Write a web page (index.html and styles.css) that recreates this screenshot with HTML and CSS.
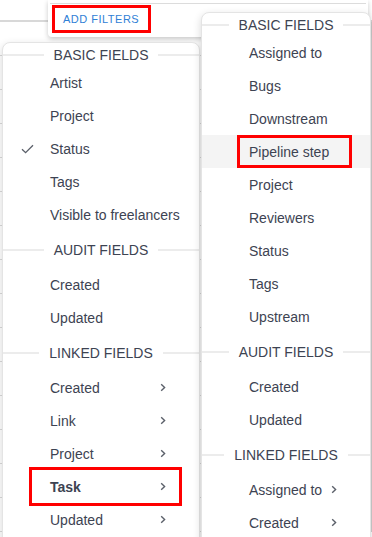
FILE: index.html
```html
<!DOCTYPE html>
<html lang="en">
<head>
<meta charset="utf-8">
<title>Filters</title>
<link rel="stylesheet" href="styles.css">
</head>
<body>
<div class="page">
  <div class="bg">
    <div class="bg-head"></div>
    <div class="bg-rows">
      <div class="bg-row"></div><div class="bg-row"></div><div class="bg-row"></div><div class="bg-row"></div>
      <div class="bg-row"></div><div class="bg-row"></div><div class="bg-row"></div><div class="bg-row"></div>
      <div class="bg-row"></div><div class="bg-row"></div><div class="bg-row"></div><div class="bg-row"></div>
      <div class="bg-row"></div><div class="bg-row"></div><div class="bg-row"></div>
    </div>
  </div>

  <div class="panel">
    <div class="panel-rule"></div>
    <div class="panel-actions">
      <button class="add-filters">ADD FILTERS</button>
    </div>
  </div>

  <div class="menu menu-left">
    <div class="hdr first"><span class="hdr-line"></span><span class="hdr-text">BASIC FIELDS</span><span class="hdr-line"></span></div>
    <div class="item"><span class="slot"></span><span class="label">Artist</span></div>
    <div class="item"><span class="slot"></span><span class="label">Project</span></div>
    <div class="item"><span class="slot"><svg class="check" width="13" height="10" viewBox="0 0 13 10"><path d="M1 5.2L4.6 8.6L12 1.2" fill="none" stroke="#5a5f69" stroke-width="1.3"/></svg></span><span class="label">Status</span></div>
    <div class="item"><span class="slot"></span><span class="label">Tags</span></div>
    <div class="item"><span class="slot"></span><span class="label">Visible to freelancers</span></div>
    <div class="hdr"><span class="hdr-line"></span><span class="hdr-text">AUDIT FIELDS</span><span class="hdr-line"></span></div>
    <div class="item"><span class="slot"></span><span class="label">Created</span></div>
    <div class="item"><span class="slot"></span><span class="label">Updated</span></div>
    <div class="hdr"><span class="hdr-line"></span><span class="hdr-text">LINKED FIELDS</span><span class="hdr-line"></span></div>
    <div class="item"><span class="slot"></span><span class="label">Created</span><svg class="chev" width="6" height="9" viewBox="0 0 6 9"><path d="M1.2 1.2L4.6 4.5L1.2 7.8" fill="none" stroke="#5a5f69" stroke-width="1.4"/></svg></div>
    <div class="item"><span class="slot"></span><span class="label">Link</span><svg class="chev" width="6" height="9" viewBox="0 0 6 9"><path d="M1.2 1.2L4.6 4.5L1.2 7.8" fill="none" stroke="#5a5f69" stroke-width="1.4"/></svg></div>
    <div class="item"><span class="slot"></span><span class="label">Project</span><svg class="chev" width="6" height="9" viewBox="0 0 6 9"><path d="M1.2 1.2L4.6 4.5L1.2 7.8" fill="none" stroke="#5a5f69" stroke-width="1.4"/></svg></div>
    <div class="item annot annot-task"><span class="slot"></span><span class="label bold">Task</span><svg class="chev" width="6" height="9" viewBox="0 0 6 9"><path d="M1.2 1.2L4.6 4.5L1.2 7.8" fill="none" stroke="#5a5f69" stroke-width="1.4"/></svg></div>
    <div class="item"><span class="slot"></span><span class="label">Updated</span><svg class="chev" width="6" height="9" viewBox="0 0 6 9"><path d="M1.2 1.2L4.6 4.5L1.2 7.8" fill="none" stroke="#5a5f69" stroke-width="1.4"/></svg></div>
  </div>

  <div class="menu menu-right">
    <div class="hdr first"><span class="hdr-line"></span><span class="hdr-text">BASIC FIELDS</span><span class="hdr-line"></span></div>
    <div class="item"><span class="slot"></span><span class="label">Assigned to</span></div>
    <div class="item"><span class="slot"></span><span class="label">Bugs</span></div>
    <div class="item"><span class="slot"></span><span class="label">Downstream</span></div>
    <div class="item hover annot annot-pipe"><span class="slot"></span><span class="label">Pipeline step</span></div>
    <div class="item"><span class="slot"></span><span class="label">Project</span></div>
    <div class="item"><span class="slot"></span><span class="label">Reviewers</span></div>
    <div class="item"><span class="slot"></span><span class="label">Status</span></div>
    <div class="item"><span class="slot"></span><span class="label">Tags</span></div>
    <div class="item"><span class="slot"></span><span class="label">Upstream</span></div>
    <div class="hdr"><span class="hdr-line"></span><span class="hdr-text">AUDIT FIELDS</span><span class="hdr-line"></span></div>
    <div class="item"><span class="slot"></span><span class="label">Created</span></div>
    <div class="item"><span class="slot"></span><span class="label">Updated</span></div>
    <div class="hdr"><span class="hdr-line"></span><span class="hdr-text">LINKED FIELDS</span><span class="hdr-line"></span></div>
    <div class="item"><span class="slot"></span><span class="label">Assigned to</span><svg class="chev" width="6" height="9" viewBox="0 0 6 9"><path d="M1.2 1.2L4.6 4.5L1.2 7.8" fill="none" stroke="#5a5f69" stroke-width="1.4"/></svg></div>
    <div class="item"><span class="slot"></span><span class="label">Created</span><svg class="chev" width="6" height="9" viewBox="0 0 6 9"><path d="M1.2 1.2L4.6 4.5L1.2 7.8" fill="none" stroke="#5a5f69" stroke-width="1.4"/></svg></div>
  </div>
</div>
</body>
</html>
```

FILE: styles.css
```css
* { box-sizing: border-box; }
html, body { margin: 0; padding: 0; background: #fff; }
body {
  font-family: "Liberation Sans", Arial, sans-serif;
  font-size: 14px;
  color: #3d4352;
}
.page {
  position: relative;
  width: 372px;
  height: 537px;
  overflow: hidden;
  background: #fff;
}

/* background layer (table behind the popups) */
.bg { position: absolute; inset: 0; }
.bg-head {
  height: 22px;
  border-bottom: 2px solid #d8d8d8;
  background: #fff;
}
.bg-rows {
  background: #fff;
  border-right: 1px solid #cfcfcf;
}
.bg-row {
  height: 34px;
  border-bottom: 1px solid #dadada;
}

/* top filter panel */
.panel {
  position: absolute;
  left: 48px;
  top: 0;
  width: 320px;
  height: 37px;
  background: #fff;
  border-radius: 0 0 4px 4px;
  box-shadow: 0 2px 5px rgba(0, 0, 0, 0.22);
  padding: 3px 2px 0;
}
.panel-rule {
  height: 1px;
  background: #dcdcdc;
}
.panel-actions {
  padding: 4px 0 0 5px;
  display: flex;
}
.add-filters {
  font-family: "Liberation Sans", Arial, sans-serif;
  font-size: 11px;
  letter-spacing: 0.5px;
  color: #2f80d6;
  background: #fff;
  border: 0;
  height: 22px;
  width: 93px;
  padding: 0 0 0 8px;
  text-align: left;
  outline: 3px solid #ff0000;
  line-height: 22px;
}

/* menus */
.menu {
  position: absolute;
  background: #fff;
  border-radius: 8px;
  border: 1px solid #e4e4e4;
  box-shadow: 0 3px 9px rgba(0, 0, 0, 0.16);
  padding-top: 1px;
  padding-bottom: 20px;
}
.menu-left {
  left: 2px;
  top: 42px;
  width: 198px;
}
.menu-right {
  left: 201px;
  top: 12px;
  width: 170px;
}

.hdr {
  display: flex;
  align-items: center;
  height: 22px;
  margin: 8px 0 7px;
}
.hdr.first { margin: 0; }
.hdr-line {
  flex: 1;
  height: 2px;
  background: #ececec;
}
.hdr-text {
  padding: 0 10px;
  line-height: 22px;
  white-space: nowrap;
  color: #3d4352;
}

.item {
  position: relative;
  display: flex;
  align-items: center;
  height: 33px;
  padding: 0 33px 0 18px;
  white-space: nowrap;
}
.menu-right .item { padding-left: 47px; }
.menu-right .item .slot { display: none; }
.slot {
  width: 29px;
  flex: none;
  display: flex;
  align-items: center;
}
.check { display: block; margin-top: 1px; }
.label { flex: 1; }
.bold { font-weight: 700; }
.chev { display: block; flex: none; margin-left: 6px; }
.item.hover { background: #f4f4f4; }

/* annotation boxes */
.annot::after {
  content: "";
  position: absolute;
  border: 3px solid #ff0000;
  pointer-events: none;
}
.annot-task::after {
  top: -3px;
  bottom: -3px;
  left: 26px;
  right: 17px;
}
.annot-pipe::after {
  top: 0;
  bottom: 0;
  left: 35px;
  right: 18px;
}
```
